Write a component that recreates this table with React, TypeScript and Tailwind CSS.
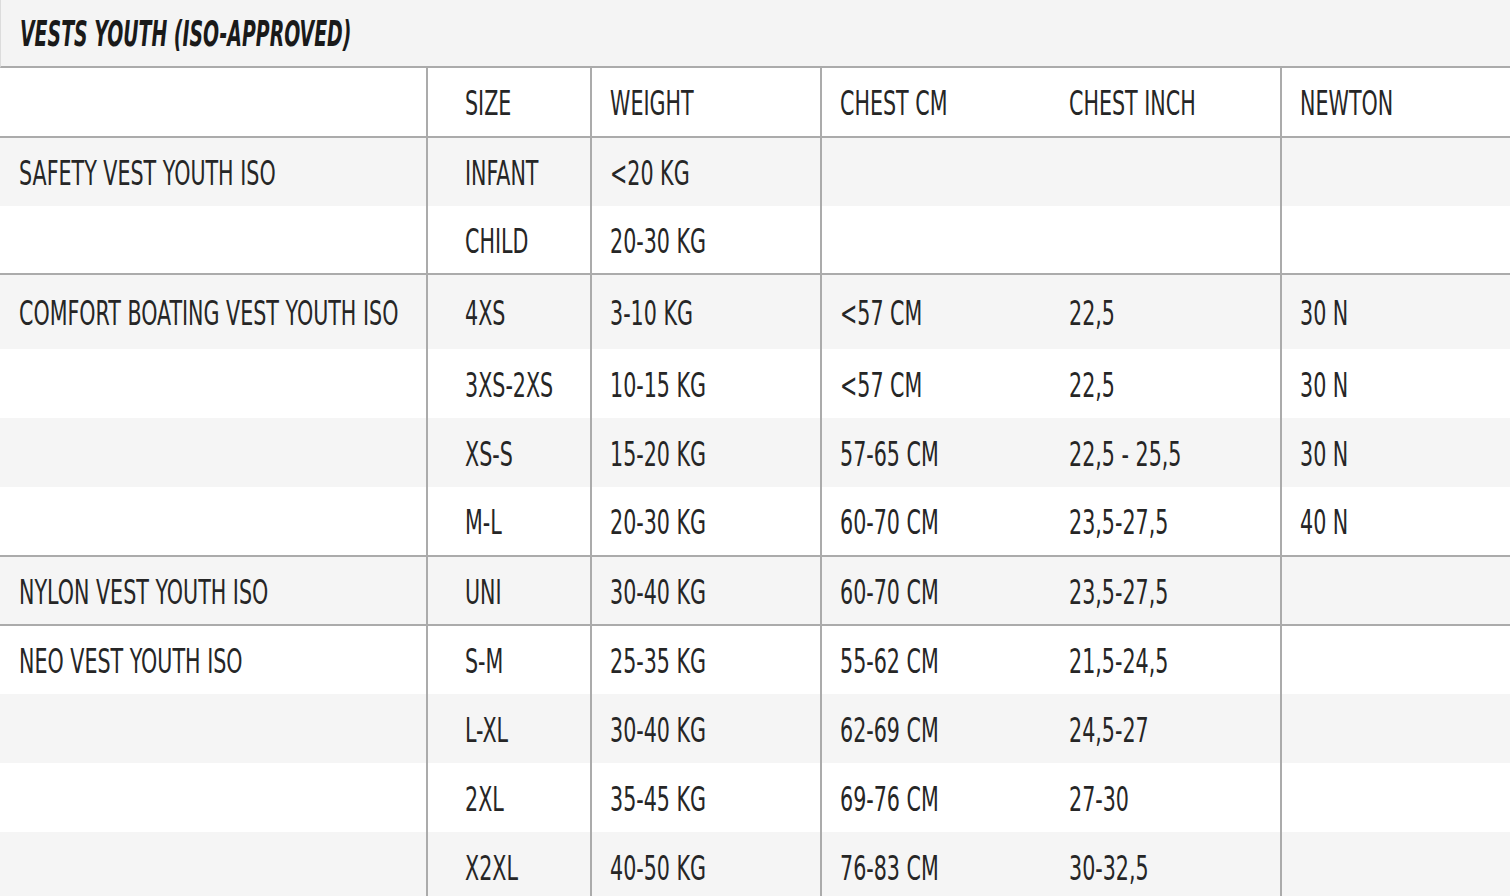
import React from "react";

type Row = { size: string; weight: string; cm: string; inch: string; newton: string; h: number };
type Group = { name: string; rows: Row[] };

const groups: Group[] = [
  {
    name: "SAFETY VEST YOUTH ISO",
    rows: [
      { size: "INFANT", weight: "<20 KG", cm: "", inch: "", newton: "", h: 68 },
      { size: "CHILD", weight: "20-30 KG", cm: "", inch: "", newton: "", h: 67 },
    ],
  },
  {
    name: "COMFORT BOATING VEST YOUTH ISO",
    rows: [
      { size: "4XS", weight: "3-10 KG", cm: "<57 CM", inch: "22,5", newton: "30 N", h: 74 },
      { size: "3XS-2XS", weight: "10-15 KG", cm: "<57 CM", inch: "22,5", newton: "30 N", h: 69 },
      { size: "XS-S", weight: "15-20 KG", cm: "57-65 CM", inch: "22,5 - 25,5", newton: "30 N", h: 69 },
      { size: "M-L", weight: "20-30 KG", cm: "60-70 CM", inch: "23,5-27,5", newton: "40 N", h: 68 },
    ],
  },
  {
    name: "NYLON VEST YOUTH ISO",
    rows: [{ size: "UNI", weight: "30-40 KG", cm: "60-70 CM", inch: "23,5-27,5", newton: "", h: 67 }],
  },
  {
    name: "NEO VEST YOUTH ISO",
    rows: [
      { size: "S-M", weight: "25-35 KG", cm: "55-62 CM", inch: "21,5-24,5", newton: "", h: 68 },
      { size: "L-XL", weight: "30-40 KG", cm: "62-69 CM", inch: "24,5-27", newton: "", h: 69 },
      { size: "2XL", weight: "35-45 KG", cm: "69-76 CM", inch: "27-30", newton: "", h: 69 },
      { size: "X2XL", weight: "40-50 KG", cm: "76-83 CM", inch: "30-32,5", newton: "", h: 69 },
    ],
  },
];

// condensed look: condensed font squeezed a bit more
const T = ({ children }: { children: React.ReactNode }) => (
  <span className="inline-block origin-left scale-x-[0.675] whitespace-nowrap pt-[2px]">{children}</span>
);

const Cells = ({ r, name }: { r: Row; name: string }) => (
  <>
    <div className="w-[426px] shrink-0 flex items-center pl-[19px]">
      <T>{name}</T>
    </div>
    <div className="w-[164px] shrink-0 flex items-center pl-[37px] border-l-2 border-[#ababab]">
      <T>{r.size}</T>
    </div>
    <div className="w-[230px] shrink-0 flex items-center pl-[18px] border-l-2 border-[#ababab]">
      <T>{r.weight}</T>
    </div>
    <div className="w-[230px] shrink-0 flex items-center pl-[18px] border-l-2 border-[#ababab]">
      <T>{r.cm}</T>
    </div>
    <div className="w-[230px] shrink-0 flex items-center pl-[19px]">
      <T>{r.inch}</T>
    </div>
    <div className="flex-1 flex items-center pl-[18px] border-l-2 border-[#ababab]">
      <T>{r.newton}</T>
    </div>
  </>
);

export default function App() {
  let stripe = 0;
  return (
    <div
      className="w-[1510px] h-[896px] overflow-hidden bg-white text-[#262626] text-[34px] leading-none"
      style={{ fontFamily: '"Liberation Sans Narrow", "DejaVu Sans Condensed", "Liberation Sans", sans-serif' }}
    >
      <div className="h-[68px] bg-[#f4f4f4] border-l border-[#dcdcdc] border-b-2 border-b-[#ababab] flex items-center pl-[19px] pt-[3px]">
        <span className="inline-block origin-left scale-x-[0.6] font-bold italic text-[35px] text-[#1a1a1a] whitespace-nowrap">
          VESTS YOUTH (ISO-APPROVED)
        </span>
      </div>
      <div className="h-[68px] flex bg-white">
        <Cells r={{ size: "SIZE", weight: "WEIGHT", cm: "CHEST CM", inch: "CHEST INCH", newton: "NEWTON", h: 68 }} name="" />
      </div>
      {groups.map((g) => (
        <div key={g.name} className="border-t-2 border-[#ababab]">
          {g.rows.map((r, i) => {
            const grey = stripe++ % 2 === 0;
            return (
              <div
                key={r.size}
                className={grey ? "flex bg-[#f5f5f5]" : "flex bg-white"}
                style={{ height: r.h }}
              >
                <Cells r={r} name={i === 0 ? g.name : ""} />
              </div>
            );
          })}
        </div>
      ))}
    </div>
  );
}
